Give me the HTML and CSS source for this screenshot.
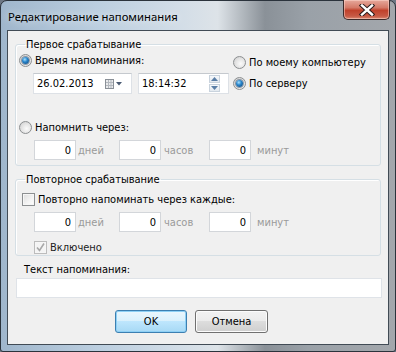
FILE: index.html
```html
<!DOCTYPE html>
<html lang="ru">
<head>
    <meta charset="UTF-8">
    <title>Редактирование напоминания</title>
    <link rel="stylesheet" href="styles.css">
</head>
<body>
    <div class="window">
        <!-- Title bar -->
        <div class="titlebar">
            <span class="title">Редактирование напоминания</span>
            <div class="close-btn">
                <svg width="16" height="12" viewBox="0 0 16 12">
                    <path d="M3 1.5 L13 10.5 M13 1.5 L3 10.5" stroke="#2a1a1a" stroke-width="4.4" stroke-linecap="square"/>
                    <path d="M3 1.5 L13 10.5 M13 1.5 L3 10.5" stroke="#fff" stroke-width="2.4" stroke-linecap="square"/>
                </svg>
            </div>
        </div>

        <div class="client">
            <!-- First trigger -->
            <fieldset class="group group-first">
                <legend>Первое срабатывание</legend>
                <div class="first-top">
                    <div class="first-left">
                        <div class="opt opt-time"><span class="radio checked"></span>Время напоминания:</div>
                        <div class="dt-row">
                            <div class="field date-field">
                                <span>26.02.2013</span>
                                <span class="cal-icon">
                                    <svg width="18" height="10" viewBox="0 0 18 10">
                                        <rect x="0.5" y="0.5" width="8" height="9" fill="#e9eaec" stroke="#8a9097"/>
                                        <path d="M1 3.5 H8 M1 6.5 H8 M3.5 1 V9 M6 1 V9" stroke="#b3b8be"/>
                                        <path d="M11 3 H17 L14 6.5 Z" fill="#4a5a72"/>
                                    </svg>
                                </span>
                            </div>
                            <div class="field time-field">
                                <span>18:14:32</span>
                                <span class="spin">
                                    <span class="spin-btn"><svg width="7" height="4" viewBox="0 0 7 4"><path d="M0 4 L3.5 0 L7 4 Z" fill="#5a7ea6"/></svg></span>
                                    <span class="spin-btn"><svg width="7" height="4" viewBox="0 0 7 4"><path d="M0 0 L3.5 4 L7 0 Z" fill="#5a7ea6"/></svg></span>
                                </span>
                            </div>
                        </div>
                    </div>
                    <div class="first-right">
                        <div class="opt"><span class="radio"></span>По моему компьютеру</div>
                        <div class="opt opt-server"><span class="radio checked"></span>По серверу</div>
                    </div>
                </div>
                <div class="opt opt-after"><span class="radio"></span>Напомнить через:</div>
                <div class="nums">
                    <div class="num-cell cell-days"><div class="field num">0</div><span class="unit">дней</span></div>
                    <div class="num-cell cell-hours"><div class="field num">0</div><span class="unit">часов</span></div>
                    <div class="num-cell cell-mins"><div class="field num">0</div><span class="unit">минут</span></div>
                </div>
            </fieldset>

            <!-- Repeat -->
            <fieldset class="group group-repeat">
                <legend>Повторное срабатывание</legend>
                <div class="opt opt-repeat"><span class="check"></span>Повторно напоминать через каждые:</div>
                <div class="nums">
                    <div class="num-cell cell-days"><div class="field num">0</div><span class="unit">дней</span></div>
                    <div class="num-cell cell-hours"><div class="field num">0</div><span class="unit">часов</span></div>
                    <div class="num-cell cell-mins"><div class="field num">0</div><span class="unit">минут</span></div>
                </div>
                <div class="opt opt-enabled">
                    <span class="check disabled">
                        <svg width="11" height="11" viewBox="0 0 11 11"><path d="M2 5.5 L4.5 8.5 L9 1.5" fill="none" stroke="#a8a8a8" stroke-width="1.6"/></svg>
                    </span>Включено
                </div>
            </fieldset>

            <div class="text-label">Текст напоминания:</div>
            <div class="field text-field"></div>

            <div class="buttons">
                <div class="btn btn-default">OK</div>
                <div class="btn">Отмена</div>
            </div>
        </div>
    </div>
</body>
</html>
```

FILE: styles.css
```css
/* Windows 7 dialog */
body {
    margin: 0;
    padding: 0;
    width: 396px;
    height: 352px;
    overflow: hidden;
    font-family: 'DejaVu Sans Condensed', 'DejaVu Sans', sans-serif;
    font-stretch: condensed;
    font-size: 11px;
    color: #000;
    background: #6d7784;
}

.window {
    box-sizing: border-box;
    width: 396px;
    height: 352px;
    border: 1px solid #2b333c;
    border-radius: 7px 7px 3px 3px;
    background: linear-gradient(90deg, #9fb6cc 0%, #bccfe0 25%, #d2dde7 45%, #dde3e8 55%, #8a9198 67%, #9aa1a8 78%, #a3a7ac 100%);
    display: flex;
    flex-direction: column;
    padding: 0 6px 6px;
}

/* Title bar */
.titlebar {
    height: 29px;
    display: flex;
    align-items: flex-start;
}

.title {
    font-family: 'Noto Sans', sans-serif;
    font-stretch: normal;
    font-size: 11.3px;
    color: #000;
    margin: 8px 0 0 1px;
    text-shadow: 0 0 8px rgba(255, 255, 255, 0.9);
}

.close-btn {
    margin-left: auto;
    margin-right: -1px;
    margin-top: -1px;
    width: 47px;
    height: 20px;
    box-sizing: border-box;
    border: 1px solid #3c2b2b;
    border-top: none;
    border-radius: 0 0 5px 5px;
    background: linear-gradient(180deg, #e6a99c 0%, #d47a68 40%, #c0412b 55%, #c75a45 85%, #d98a74 100%);
    box-shadow: inset 0 0 0 1px rgba(255, 220, 210, 0.5);
    display: flex;
    align-items: center;
    justify-content: center;
}

/* Client area */
.client {
    flex: 1;
    border: 1px solid #414b55;
    background: #f0f0f0;
    padding: 7px 7px 0 7px;
}

.group {
    margin: 0;
    padding: 0 0 0 3px;
    border: 1px solid #d5dfe5;
    border-radius: 3px;
    box-shadow: inset 1px 1px 0 #fff;
}

.group legend {
    margin-left: 6px;
    padding: 0 1px;
    line-height: 13px;
}

.group-first {
    padding-bottom: 5px;
}

.group-repeat {
    margin-top: 7px;
    padding-bottom: 1px;
}

/* Options */
.opt {
    display: flex;
    align-items: center;
    height: 14px;
    white-space: nowrap;
}

.radio {
    box-sizing: border-box;
    width: 13px;
    height: 13px;
    margin-right: 3px;
    border-radius: 50%;
    border: 1px solid #8c8f91;
    background: radial-gradient(circle at 60% 60%, #fbfbfb 0%, #e2e2e2 55%, #c9c9c9 100%);
    display: flex;
    align-items: center;
    justify-content: center;
    flex: none;
}

.radio.checked::after {
    content: "";
    width: 7px;
    height: 7px;
    border-radius: 50%;
    background: radial-gradient(circle at 40% 35%, #a8e2ff 0%, #2a86cc 40%, #0d3f70 100%);
    box-shadow: 0 0 0 1px rgba(30, 55, 85, 0.45);
}

.check {
    box-sizing: border-box;
    width: 13px;
    height: 13px;
    margin-right: 3px;
    border: 1px solid #8c8f91;
    background: linear-gradient(135deg, #dcdcdc 0%, #f4f4f4 60%, #ffffff 100%);
    box-shadow: inset 0 0 0 1px #f6f6f6;
    flex: none;
    display: flex;
    align-items: center;
    justify-content: center;
}

.check.disabled {
    border-color: #bcbcbc;
    background: #f4f4f4;
}

/* First group */
.first-top {
    display: flex;
}

.first-left {
    width: 214px;
}

.opt-time {
    margin: 2px 0 0 0;
}

.dt-row {
    display: flex;
    margin: 6px 0 0 14px;
    gap: 6px;
}

.field {
    box-sizing: border-box;
    height: 21px;
    background: #fff;
    border: 1px solid #dde1e6;
    border-top-color: #c5c9ce;
    display: flex;
    align-items: center;
}

.date-field {
    width: 99px;
    padding-left: 3px;
}

.cal-icon {
    margin-left: auto;
    margin-right: 8px;
    display: flex;
}

.time-field {
    width: 91px;
    padding-left: 3px;
}

.spin {
    margin-left: auto;
    margin-right: 8px;
    display: flex;
    flex-direction: column;
    gap: 1px;
}

.spin-btn {
    box-sizing: border-box;
    width: 11px;
    height: 8px;
    border: 1px solid #c9d3dd;
    background: linear-gradient(180deg, #f5f8fb, #e3e9ef);
    display: flex;
    align-items: center;
    justify-content: center;
}

.first-right {
    padding-left: 0;
}

.first-right .opt:first-child {
    margin-top: 4px;
}

.opt-server {
    margin-top: 7px;
}

.opt-after {
    margin-top: 26px;
}

/* Number rows */
.nums {
    display: flex;
    margin: 6px 0 0 15px;
}

.num-cell {
    display: flex;
    align-items: center;
}

.num {
    width: 42px;
    height: 20px;
    justify-content: flex-end;
    padding-right: 4px;
    border-color: #d3d6da;
}

.unit {
    color: #9a9a9a;
}

.cell-days {
    width: 85px;
}

.cell-days .unit {
    margin-left: 2px;
}

.cell-hours {
    width: 90px;
}

.cell-hours .unit {
    margin-left: 3px;
}

.cell-mins .unit {
    margin-left: 6px;
}

/* Repeat group */
.opt-repeat {
    margin: 6px 0 0 3px;
}

.opt-enabled {
    margin: 8px 0 0 15px;
    color: #222;
}

/* Bottom */
.text-label {
    margin: 7px 0 0 9px;
    line-height: 14px;
}

.text-field {
    margin: 1px 0 0 1px;
    width: 366px;
    height: 20px;
    border-color: #dfe3e8;
}

.buttons {
    display: flex;
    gap: 8px;
    margin: 12px 0 0 100px;
}

.btn {
    box-sizing: border-box;
    width: 73px;
    height: 23px;
    border: 1px solid #707070;
    border-radius: 3px;
    background: linear-gradient(180deg, #f2f2f2 0%, #ebebeb 49%, #dddddd 50%, #cfcfcf 100%);
    box-shadow: inset 0 0 0 1px #fcfcfc;
    display: flex;
    align-items: center;
    justify-content: center;
}

.btn-default {
    width: 72px;
    border-color: #3c7fb1;
    background: linear-gradient(180deg, #eaf6fd 0%, #d9f0fc 49%, #bee6fd 50%, #a7d9f5 100%);
    box-shadow: inset 0 0 0 1px #8ed0f5;
}
```
